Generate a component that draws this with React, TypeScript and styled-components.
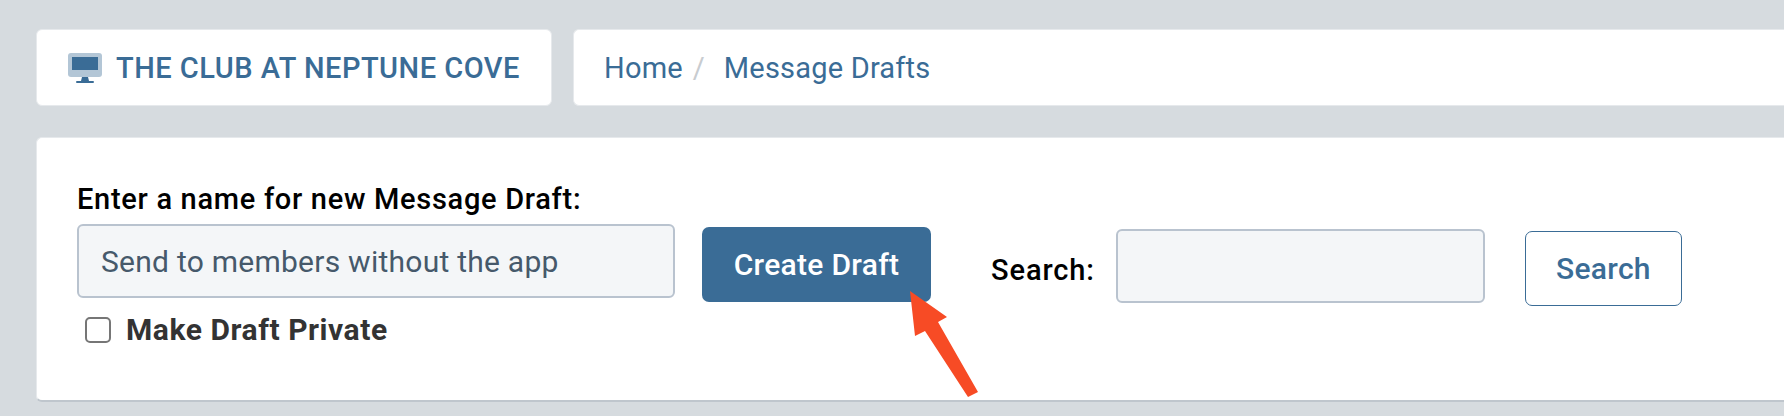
import styled, { createGlobalStyle } from "styled-components";

const GlobalStyle = createGlobalStyle`
  html, body {
    margin: 0;
    padding: 0;
    background-color: #d6dbdf;
    overflow: hidden;
    font-family: "Roboto", "Liberation Sans", sans-serif;
  }
  * {
    box-sizing: border-box;
  }
`;

const Page = styled.div`
  width: 1784px;
  height: 416px;
  padding: 29px 0 0 36px;
  position: relative;
`;

const TopBar = styled.div`
  display: flex;
  gap: 21px;
  height: 77px;
`;

const Brand = styled.div`
  width: 516px;
  display: flex;
  align-items: center;
  gap: 14px;
  padding-left: 31px;
  background-color: #fff;
  border: 1px solid #e6e9ec;
  border-radius: 6px;
`;

const BrandName = styled.span`
  color: #3a6c96;
  font-size: 29px;
  font-weight: 500;
  letter-spacing: 0.5px;
  white-space: nowrap;
`;

const Crumbs = styled.nav`
  flex: 1;
  display: flex;
  align-items: center;
  padding-left: 30px;
  background-color: #fff;
  border: 1px solid #e6e9ec;
  border-right: none;
  border-radius: 6px 0 0 6px;
`;

const Crumb = styled.a`
  color: #3a6c96;
  font-size: 29px;
  letter-spacing: 0.2px;
  white-space: nowrap;
`;

const Divider = styled.span`
  color: #c8ccd0;
  font-size: 29px;
  margin: 0 19px 0 10px;
`;

const Panel = styled.section`
  margin-top: 31px;
  height: 265px;
  display: flex;
  align-items: flex-start;
  padding: 43px 0 0 40px;
  background-color: #fff;
  border: 1px solid #e6e9ec;
  border-bottom: 2px solid #bfc6cd;
  border-right: none;
  border-radius: 6px 0 0 6px;
`;

const DraftForm = styled.div`
  width: 598px;
`;

const FieldLabel = styled.label`
  display: block;
  height: 36px;
  line-height: 36px;
  margin-bottom: 7px;
  color: #000;
  font-size: 29px;
  font-weight: 500;
  letter-spacing: 0.7px;
  white-space: nowrap;
`;

const Input = styled.input<{ $width: number }>`
  display: block;
  width: ${(props) => props.$width}px;
  height: 74px;
  padding: 0 22px;
  background-color: #f4f6f8;
  border: 2px solid #b9c3cf;
  border-radius: 6px;
  color: #46596b;
  font-family: inherit;
  font-size: 30px;
  letter-spacing: 0.25px;
  outline: none;
  &::placeholder {
    color: #46596b;
    opacity: 1;
  }
`;

const PrivateRow = styled.label`
  display: flex;
  align-items: center;
  gap: 15px;
  margin: 14px 0 0 8px;
  color: #333;
  font-size: 30px;
  font-weight: 700;
  letter-spacing: 0.55px;
  white-space: nowrap;
`;

const Checkbox = styled.span`
  width: 26px;
  height: 26px;
  background-color: #fff;
  border: 2px solid #767676;
  border-radius: 5px;
`;

const CreateButton = styled.button`
  width: 229px;
  height: 75px;
  margin: 46px 0 0 27px;
  background-color: #3a6c96;
  border: none;
  border-radius: 7px;
  color: #fff;
  font-family: inherit;
  font-size: 30px;
  font-weight: 500;
  letter-spacing: 0.3px;
  white-space: nowrap;
`;

const SearchGroup = styled.div`
  display: flex;
  align-items: flex-start;
  margin: 48px 0 0 60px;
`;

const SearchLabel = styled.label`
  align-self: center;
  margin: 5px 21px 0 0;
  color: #000;
  font-size: 29px;
  font-weight: 500;
  letter-spacing: 0.9px;
`;

const SearchButton = styled.button`
  width: 157px;
  height: 75px;
  margin: 2px 0 0 40px;
  background-color: #fff;
  border: 1px solid #3a6c96;
  border-radius: 7px;
  color: #3a6c96;
  font-family: inherit;
  font-size: 30px;
  font-weight: 500;
  letter-spacing: 0.3px;
`;

const Arrow = styled.svg`
  position: absolute;
  left: 905px;
  top: 286px;
`;

function MonitorIcon() {
  return (
    <svg width="34" height="30" viewBox="0 0 34 30">
      <rect x="0" y="0" width="34" height="24" rx="3" fill="#b3c6d6" />
      <rect x="4" y="4" width="26" height="13" fill="#3a6c96" />
      <path d="M14 24h6l1 4h4a1 1 0 0 1 0 2H9a1 1 0 0 1 0-2h4z" fill="#3a6c96" />
    </svg>
  );
}

export default function App() {
  return (
    <Page>
      <GlobalStyle />
      <TopBar>
        <Brand>
          <MonitorIcon />
          <BrandName>THE CLUB AT NEPTUNE COVE</BrandName>
        </Brand>
        <Crumbs>
          <Crumb>Home</Crumb>
          <Divider>/</Divider>
          <Crumb>Message Drafts</Crumb>
        </Crumbs>
      </TopBar>
      <Panel>
        <DraftForm>
          <FieldLabel>Enter a name for new Message Draft:</FieldLabel>
          <Input $width={598} placeholder="Send to members without the app" />
          <PrivateRow>
            <Checkbox />
            Make Draft Private
          </PrivateRow>
        </DraftForm>
        <CreateButton>Create Draft</CreateButton>
        <SearchGroup>
          <SearchLabel>Search:</SearchLabel>
          <Input $width={369} />
          <SearchButton>Search</SearchButton>
        </SearchGroup>
      </Panel>
      <Arrow width="80" height="116" viewBox="0 0 80 116">
        <path d="M5 5L42 31L33 36L73 106L63 111L20 45L10 50Z" fill="#f74b25" />
      </Arrow>
    </Page>
  );
}
